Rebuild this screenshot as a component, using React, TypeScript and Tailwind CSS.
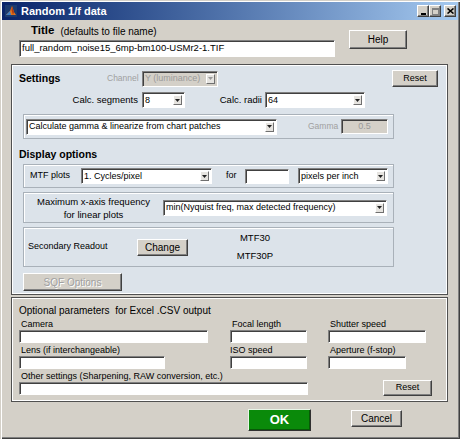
import React from 'react'

const sunken =
  'border border-t-[#808080] border-l-[#808080] border-r-white border-b-white shadow-[inset_1px_1px_0_#404040]'
const raised =
  'border border-t-white border-l-white border-r-[#404040] border-b-[#404040] shadow-[inset_-1px_-1px_0_#808080]'
const etched = 'border border-[#a9b1b9] shadow-[inset_1px_1px_0_#ffffff]'

type SelectProps = { text: string; className?: string; disabled?: boolean }

const Select = ({ text, className = '', disabled = false }: SelectProps) => (
  <div
    className={`flex items-center shrink-0 ${sunken} ${
      disabled ? 'bg-[#d4d0c8] text-[#9a9a9a]' : 'bg-white text-black'
    } ${className}`}
  >
    <span className="flex-1 overflow-hidden whitespace-nowrap pl-[2px] text-[9px] leading-none">{text}</span>
    <span
      className={`mr-[2px] flex h-[10px] w-[9px] items-center justify-center bg-[#e6e4e0] border border-t-white border-l-white border-r-[#707070] border-b-[#707070]`}
    >
      <svg width="5" height="3" viewBox="0 0 5 3">
        <path d="M0 0h5L2.5 3z" fill={disabled ? '#999' : '#222'} />
      </svg>
    </span>
  </div>
)

const Input = ({ className = '', children }: { className?: string; children?: React.ReactNode }) => (
  <div className={`shrink-0 bg-white ${sunken} ${className}`}>{children}</div>
)

const Button = ({ label, className = '' }: { label: string; className?: string }) => (
  <div className={`flex shrink-0 items-center justify-center bg-[#d4d0c8] ${raised} ${className}`}>{label}</div>
)

// small caption button in the title bar
const CapButton = ({ children, className = '' }: { children: React.ReactNode; className?: string }) => (
  <div className={`flex h-[12px] w-[12px] items-center justify-center bg-[#d4d0c8] ${raised} ${className}`}>
    {children}
  </div>
)

export default function App() {
  return (
    <div className="flex h-[439px] w-[460px] flex-col bg-[#d4d0c8] font-['Liberation_Sans',Arial,sans-serif] text-[9.5px] text-black shadow-[inset_1px_1px_0_#d4d0c8,inset_2px_2px_0_#ffffff,inset_-1px_-1px_0_#404040,inset_-2px_-2px_0_#808080] overflow-hidden">
      {/* Title bar */}
      <div className="mx-[2px] mt-[2px] flex h-[18px] shrink-0 items-center bg-linear-to-r from-[#0a246a] to-[#a6caf0]">
        <svg width="12" height="12" viewBox="0 0 12 12" className="ml-[3px]">
          <rect width="12" height="12" fill="#1c3a6e" />
          <path d="M1 10 L5 6 L7 1 L9 7 L11 10 Z" fill="#e2731c" />
          <path d="M1 10 L5 6 L6 10 Z" fill="#3e7fc4" />
          <path d="M7 1 L9 7 L8 10 L6.5 5 Z" fill="#b03a12" />
        </svg>
        <span className="ml-[4px] text-[11px] font-bold text-white">Random 1/f data</span>
        <div className="ml-auto mr-[2px] flex items-center">
          <CapButton>
            <div className="mt-[5px] h-[2px] w-[5px] bg-black" />
          </CapButton>
          <CapButton className="ml-[0px]">
            <div className="h-[7px] w-[7px] border border-t-2 border-[#808080]" />
          </CapButton>
          <CapButton className="ml-[3px]">
            <svg width="7" height="6" viewBox="0 0 7 6">
              <path d="M0.5 0.5 L6.5 5.5 M6.5 0.5 L0.5 5.5" stroke="#000" strokeWidth="1.6" />
            </svg>
          </CapButton>
        </div>
      </div>

      {/* Title row */}
      <div className="flex shrink-0">
        <div className="ml-[19px] mt-[2px] flex w-[316px] flex-col">
          <div className="flex h-[18px] items-center pl-[12px]">
            <span className="text-[11.5px] font-bold">Title</span>
            <span className="ml-[6px] text-[10px]">(defaults to file name)</span>
          </div>
          <Input className="flex h-[17px] items-center pl-[2px]">
            <span className="text-[9.5px]">full_random_noise15_6mp-bm100-USMr2-1.TIF</span>
          </Input>
        </div>
        <Button label="Help" className="ml-[14px] mt-[10px] h-[19px] w-[58px] text-[10px]" />
      </div>

      {/* Settings panel */}
      <div className="ml-[11px] mt-[7px] flex h-[231px] w-[437px] shrink-0 flex-col border border-[#505050] bg-[#dce3ea] shadow-[inset_1px_1px_0_#ffffff,inset_-1px_-1px_0_#ffffff]">
        <div className="mt-[5px] flex h-[17px] items-center">
          <span className="ml-[7px] w-[88px] text-[10.5px] font-bold">Settings</span>
          <span className="w-[35px] text-[8.5px] text-[#a0a0a0]">Channel</span>
          <Select text="Y (luminance)" disabled className="h-[16px] w-[76px]" />
          <Button label="Reset" className="ml-[174px] h-[17px] w-[46px] text-[9px]" />
        </div>

        <div className="mt-[5px] flex h-[16px] items-center">
          <span className="w-[126px] text-right text-[9.5px]">Calc. segments</span>
          <Select text="8" className="ml-[4px] h-[16px] w-[43px]" />
          <span className="w-[80px] pr-[3px] text-right text-[9.5px]">Calc. radii</span>
          <Select text="64" className="h-[16px] w-[100px]" />
        </div>

        <div className={`ml-[11px] mt-[6px] flex h-[25px] w-[371px] items-center ${etched}`}>
          <Select text="Calculate gamma & linearize from chart patches" className="ml-[2px] h-[16px] w-[251px]" />
          <span className="ml-[31px] w-[33px] text-[8.5px] text-[#a0a0a0]">Gamma</span>
          <div className={`flex h-[15px] w-[47px] items-center justify-center bg-[#d4d0c8] text-[9px] text-[#9a9a9a] ${sunken}`}>
            0.5
          </div>
        </div>

        <div className="mt-[9px] flex h-[14px] items-center">
          <span className="ml-[7px] text-[10.5px] font-bold">Display options</span>
        </div>

        <div className={`ml-[11px] mt-[2px] flex h-[24px] w-[371px] items-center ${etched}`}>
          <span className="ml-[6px] w-[51px] text-[9px]">MTF plots</span>
          <Select text="1. Cycles/pixel" className="h-[16px] w-[131px]" />
          <span className="w-[33px] pl-[14px] text-[9px]">for</span>
          <Input className="h-[15px] w-[44px]" />
          <Select text="pixels per inch" className="ml-[9px] h-[16px] w-[90px]" />
        </div>

        <div className={`ml-[11px] mt-[4px] flex h-[31px] w-[371px] items-center ${etched}`}>
          <div className="flex w-[139px] flex-col items-center text-[9.5px] leading-[13px]">
            <span>Maximum x-axis frequency</span>
            <span>for linear plots</span>
          </div>
          <Select text="min(Nyquist freq, max detected frequency)" className="h-[16px] w-[224px]" />
        </div>

        <div className={`ml-[11px] mt-[4px] flex h-[40px] w-[371px] items-center ${etched}`}>
          <span className="ml-[4px] w-[109px] text-[9px]">Secondary Readout</span>
          <Button label="Change" className="h-[17px] w-[51px] text-[10px]" />
          <div className="ml-[49px] flex w-[36px] flex-col items-center text-[9.5px] leading-[18px]">
            <span>MTF30</span>
            <span>MTF30P</span>
          </div>
        </div>

        <div
          className={`ml-[11px] mt-[6px] flex h-[18px] w-[99px] items-center justify-center bg-[#d4d0c8] text-[10px] text-[#a0a0a0] [text-shadow:1px_1px_0_#ffffff] ${raised}`}
        >
          SQF Options
        </div>
      </div>

      {/* Optional parameters panel */}
      <div className="ml-[11px] mt-[2px] flex h-[105px] w-[437px] shrink-0 flex-col border border-[#505050] bg-[#d4d0c8] shadow-[inset_1px_1px_0_#ffffff,inset_-1px_-1px_0_#ffffff]">
        <div className="mt-[5px] flex h-[14px] items-center">
          <span className="ml-[7px] whitespace-pre text-[10px]">Optional parameters  for Excel .CSV output</span>
        </div>

        <div className="mt-[1px] flex">
          <div className="ml-[7px] flex w-[189px] flex-col">
            <span className="h-[12px] pl-[2px] text-[9px] leading-[12px]">Camera</span>
            <Input className="h-[13px] w-[189px]" />
          </div>
          <div className="ml-[22px] flex w-[77px] flex-col">
            <span className="h-[12px] pl-[2px] text-[9px] leading-[12px]">Focal length</span>
            <Input className="h-[13px] w-[77px]" />
          </div>
          <div className="ml-[21px] flex w-[98px] flex-col">
            <span className="h-[12px] pl-[2px] text-[9px] leading-[12px]">Shutter speed</span>
            <Input className="h-[13px] w-[98px]" />
          </div>
        </div>

        <div className="mt-[1px] flex">
          <div className="ml-[7px] flex w-[189px] flex-col">
            <span className="h-[12px] pl-[2px] text-[9px] leading-[12px]">Lens (if interchangeable)</span>
            <Input className="h-[13px] w-[146px]" />
          </div>
          <div className="ml-[22px] flex w-[77px] flex-col">
            <span className="h-[12px] text-[9px] leading-[12px]">ISO speed</span>
            <Input className="h-[13px] w-[77px]" />
          </div>
          <div className="ml-[21px] flex w-[98px] flex-col">
            <span className="h-[12px] pl-[2px] text-[9px] leading-[12px]">Aperture (f-stop)</span>
            <Input className="h-[13px] w-[78px]" />
          </div>
        </div>

        <div className="mt-[1px] flex items-end">
          <div className="ml-[7px] flex w-[289px] flex-col">
            <span className="h-[12px] pl-[2px] text-[9px] leading-[12px]">
              Other settings (Sharpening, RAW conversion, etc.)
            </span>
            <Input className="h-[13px] w-[289px]" />
          </div>
          <Button label="Reset" className="mb-[-1px] ml-[75px] h-[16px] w-[49px] text-[9px]" />
        </div>
      </div>

      {/* Bottom buttons */}
      <div className="mt-[7px] flex shrink-0 items-start">
        <div
          className={`ml-[248px] flex h-[22px] w-[63px] items-center justify-center bg-[#0a8a0a] text-[13px] font-bold text-white border border-t-[#e8f5e8] border-l-[#e8f5e8] border-r-[#303030] border-b-[#303030] shadow-[inset_-1px_-1px_0_#075a07]`}
        >
          OK
        </div>
        <Button label="Cancel" className="ml-[40px] mt-[1px] h-[17px] w-[51px] text-[10px]" />
      </div>
    </div>
  )
}
